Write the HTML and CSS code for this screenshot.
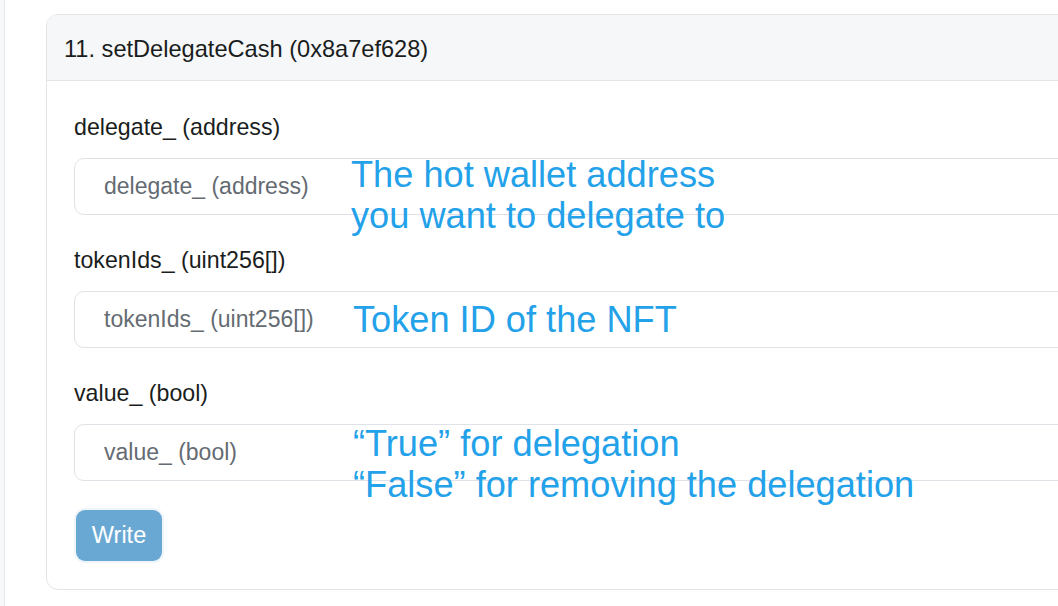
FILE: index.html
```html
<!DOCTYPE html>
<html lang="en">
<head>
<meta charset="utf-8">
<title>setDelegateCash</title>
<link rel="stylesheet" href="styles.css">
</head>
<body>
<div class="page">
  <div class="strip"></div>
  <main class="main">
    <section class="card">
      <header class="card-header">11. setDelegateCash (0x8a7ef628)</header>
      <div class="card-body">
        <div class="form-group">
          <label class="label">delegate_ (address)</label>
          <input class="input" type="text" placeholder="delegate_ (address)">
        </div>
        <div class="form-group">
          <label class="label">tokenIds_ (uint256[])</label>
          <input class="input" type="text" placeholder="tokenIds_ (uint256[])">
        </div>
        <div class="form-group last">
          <label class="label">value_ (bool)</label>
          <input class="input" type="text" placeholder="value_ (bool)">
        </div>
        <button class="btn" type="button" disabled>Write</button>
      </div>
    </section>
  </main>
  <div class="note note-1">The hot wallet address<br>you want to delegate to</div>
  <div class="note note-2">Token ID of the NFT</div>
  <div class="note note-3">“True” for delegation<br>“False” for removing the delegation</div>
</div>
</body>
</html>
```
FILE: styles.css
```css
html, body {
  margin: 0;
  padding: 0;
  background: #ffffff;
  overflow: hidden;
}

body {
  font-family: "Liberation Sans", Arial, sans-serif;
  color: #212529;
}

.page {
  position: relative;
  display: flex;
  width: 1058px;
  height: 606px;
  overflow: hidden;
}

.strip {
  flex: 0 0 4px;
  background: #f7f8fa;
  border-right: 1px solid #e6e8eb;
}

.main {
  flex: 1 1 auto;
  padding: 14px 0 0 41px;
}

.card {
  width: 1120px;
  border: 1px solid #e2e5e8;
  border-radius: 12px;
  background: #ffffff;
}

.card-header {
  background: #f6f7f9;
  border-bottom: 1px solid #e2e5e8;
  border-radius: 11px 11px 0 0;
  padding: 17px 17px 14px;
  font-size: 23.6px;
  line-height: 34px;
  color: #1a1d20;
}

.card-body {
  padding: 29px 27px 28px;
}

.form-group {
  margin-bottom: 28px;
}

.form-group.last {
  margin-bottom: 29px;
}

.label {
  display: block;
  font-size: 23.2px;
  line-height: 34px;
  margin-bottom: 14px;
  color: #1a1d20;
}

.input {
  display: block;
  box-sizing: border-box;
  width: 100%;
  height: 57px;
  padding: 0 0 0 29px;
  border: 1px solid #dfe2e6;
  border-radius: 10px;
  font-family: "Liberation Sans", Arial, sans-serif;
  font-size: 23px;
  color: #495057;
  background: #ffffff;
  outline: none;
}

.input::placeholder {
  color: #646b72;
  opacity: 1;
}

.btn {
  display: block;
  box-sizing: border-box;
  width: 86px;
  height: 51px;
  margin-left: 2px;
  padding: 0;
  border: none;
  border-radius: 9px;
  background: #6aa8d4;
  color: #ffffff;
  font-family: "Liberation Sans", Arial, sans-serif;
  font-size: 23.5px;
  box-shadow: 0 0 0 2px #eef5fb;
}

.note {
  position: absolute;
  left: 351px;
  font-family: "Liberation Sans", Arial, sans-serif;
  font-size: 36.2px;
  line-height: 41px;
  color: #23a1e9;
  white-space: nowrap;
}

.note-1 { top: 154px; }
.note-2 { top: 299px; left: 353px; }
.note-3 { top: 423px; left: 353px; }
```
